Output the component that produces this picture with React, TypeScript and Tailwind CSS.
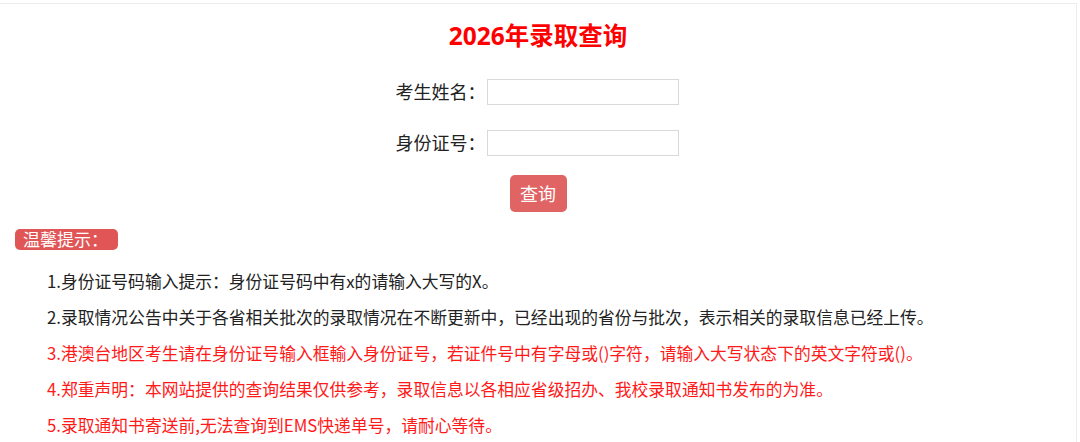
import React, { useState } from 'react';

const notes = [
  { text: '1.身份证号码输入提示：身份证号码中有x的请输入大写的X。', red: false },
  { text: '2.录取情况公告中关于各省相关批次的录取情况在不断更新中，已经出现的省份与批次，表示相关的录取信息已经上传。', red: false },
  { text: '3.港澳台地区考生请在身份证号输入框輸入身份证号，若证件号中有字母或()字符，请输入大写状态下的英文字符或()。', red: true },
  { text: '4.郑重声明：本网站提供的查询结果仅供参考，录取信息以各相应省级招办、我校录取通知书发布的为准。', red: true },
  { text: '5.录取通知书寄送前,无法查询到EMS快递单号，请耐心等待。', red: true },
];

export default function App() {
  const [name, setName] = useState('');
  const [idNo, setIdNo] = useState('');

  return (
    <div className="bg-white w-[1080px] h-[442px] overflow-hidden font-['Noto_Sans','Noto_Sans_CJK_SC',sans-serif]">
      <div className="mt-[3px] w-[1077px] h-[439px] border-t border-r border-[#ececec] pt-[14px]">
        <h1 className="text-center text-[24.5px] leading-[36px] font-bold text-[#ff0000]">2026年录取查询</h1>

        <form className="flex flex-col items-center mt-[25px]" onSubmit={(e) => e.preventDefault()}>
          <div className="flex items-center h-[26px] pr-[2px]">
            <label className="text-[18px] text-[#222] mr-[1px]">考生姓名：</label>
            <input
              value={name}
              onChange={(e) => setName(e.target.value)}
              className="w-[192px] h-[26px] border border-[#d9d9d9] outline-none px-1 text-[14px]"
            />
          </div>
          <div className="flex items-center h-[26px] mt-[25px] pr-[2px]">
            <label className="text-[18px] text-[#222] mr-[1px]">身份证号：</label>
            <input
              value={idNo}
              onChange={(e) => setIdNo(e.target.value)}
              className="w-[192px] h-[26px] border border-[#d9d9d9] outline-none px-1 text-[14px]"
            />
          </div>
          <button
            type="submit"
            className="mt-[19px] w-[57px] h-[37px] rounded-[5px] bg-[#e06464] text-white text-[18px] leading-none"
          >
            查询
          </button>
        </form>

        <div className="mt-[17px] ml-[15px] w-[103px] h-[21px] rounded-[5px] bg-[#e05656] text-white text-[17px] leading-[21px] pl-[8px]">
          温馨提示：
        </div>

        <ul className="mt-[13px] pl-[47px] font-['Noto_Sans_CJK_SC',sans-serif]">
          {notes.map((n) => (
            <li
              key={n.text}
              className={`text-[16.8px] leading-[36px] whitespace-nowrap ${n.red ? 'text-[#ff1a1a]' : 'text-[#222]'}`}
            >
              {n.text}
            </li>
          ))}
        </ul>
      </div>
    </div>
  );
}
